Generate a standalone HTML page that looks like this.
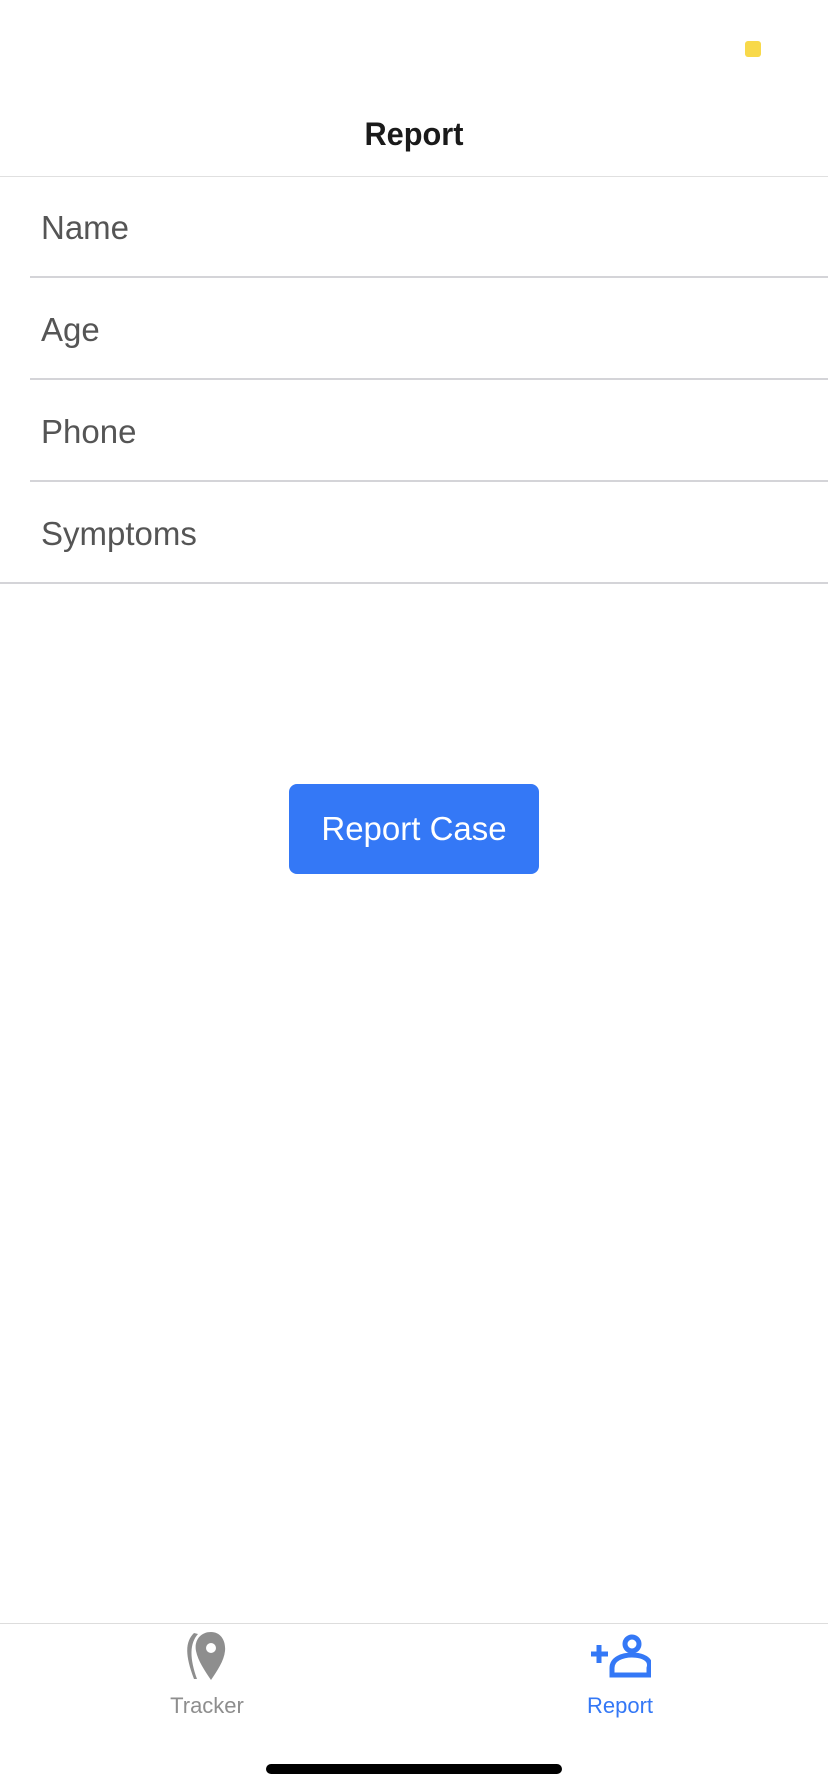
<!DOCTYPE html>
<html><head><meta charset="utf-8"><style>
body{margin:0;width:828px;height:1792px;background:#fff;position:relative;overflow:hidden;font-family:"Liberation Sans",sans-serif}
.a{position:absolute}
.t{position:absolute;left:41px;font-size:33px;color:#555;line-height:1}
.l{position:absolute;left:30px;right:0;height:2px;background:#d4d4d8}
</style></head><body>
<div class="a" style="left:745px;top:41px;width:16px;height:16px;border-radius:3px;background:#f8d94a"></div>
<div class="a" style="left:0;right:0;top:116px;text-align:center;font-size:32px;font-weight:bold;color:#1a1a1a;transform:scaleX(0.96)">Report</div>
<div class="a" style="left:0;right:0;top:176px;height:1px;background:#e0e0e0"></div>
<div class="t" style="top:211px">Name</div>
<div class="l" style="top:276px"></div>
<div class="t" style="top:313px">Age</div>
<div class="l" style="top:378px"></div>
<div class="t" style="top:415px">Phone</div>
<div class="l" style="top:480px"></div>
<div class="t" style="top:517px">Symptoms</div>
<div class="l" style="top:582px;left:0"></div>
<div class="a" style="left:289px;top:784px;width:250px;height:90px;border-radius:8px;background:#3478f6;color:#fff;font-size:33px;line-height:90px;text-align:center">Report Case</div>
<div class="a" style="left:0;right:0;top:1623px;height:1px;background:#ddd"></div>
<svg class="a" style="left:180px;top:1629px" width="52" height="54" viewBox="0 0 52 50">
<path d="M14 2 C6 10 4 22 14 48 L17 48 C9 26 10 12 18 3 Z" fill="#8e8e8e"/>
<path d="M31 1 C20 1 14 10 16 20 C18 30 25 40 31 49 C37 40 44 30 45 20 C46 10 41 1 31 1 Z" fill="#8e8e8e"/>
<circle cx="31" cy="17" r="5" fill="#fff"/></svg>
<div class="a" style="left:147px;width:120px;top:1693px;text-align:center;font-size:22px;color:#8e8e8e">Tracker</div>
<svg class="a" style="left:591px;top:1633px" width="60" height="48" viewBox="0 0 60 48">
<path d="M8 12v18M0 21h17" stroke="#3478f6" stroke-width="5"/>
<circle cx="41" cy="11" r="7" fill="none" stroke="#3478f6" stroke-width="5"/>
<path d="M21 44 V37 C21 28 31 24 41 24 C51 24 61 28 58 37 V44 Z" fill="none" stroke="#3478f6" stroke-width="5" transform="translate(0,-2)"/></svg>
<div class="a" style="left:560px;width:120px;top:1693px;text-align:center;font-size:22px;color:#3478f6">Report</div>
<div class="a" style="left:266px;top:1764px;width:296px;height:10px;border-radius:5px;background:#000"></div>
</body></html>
